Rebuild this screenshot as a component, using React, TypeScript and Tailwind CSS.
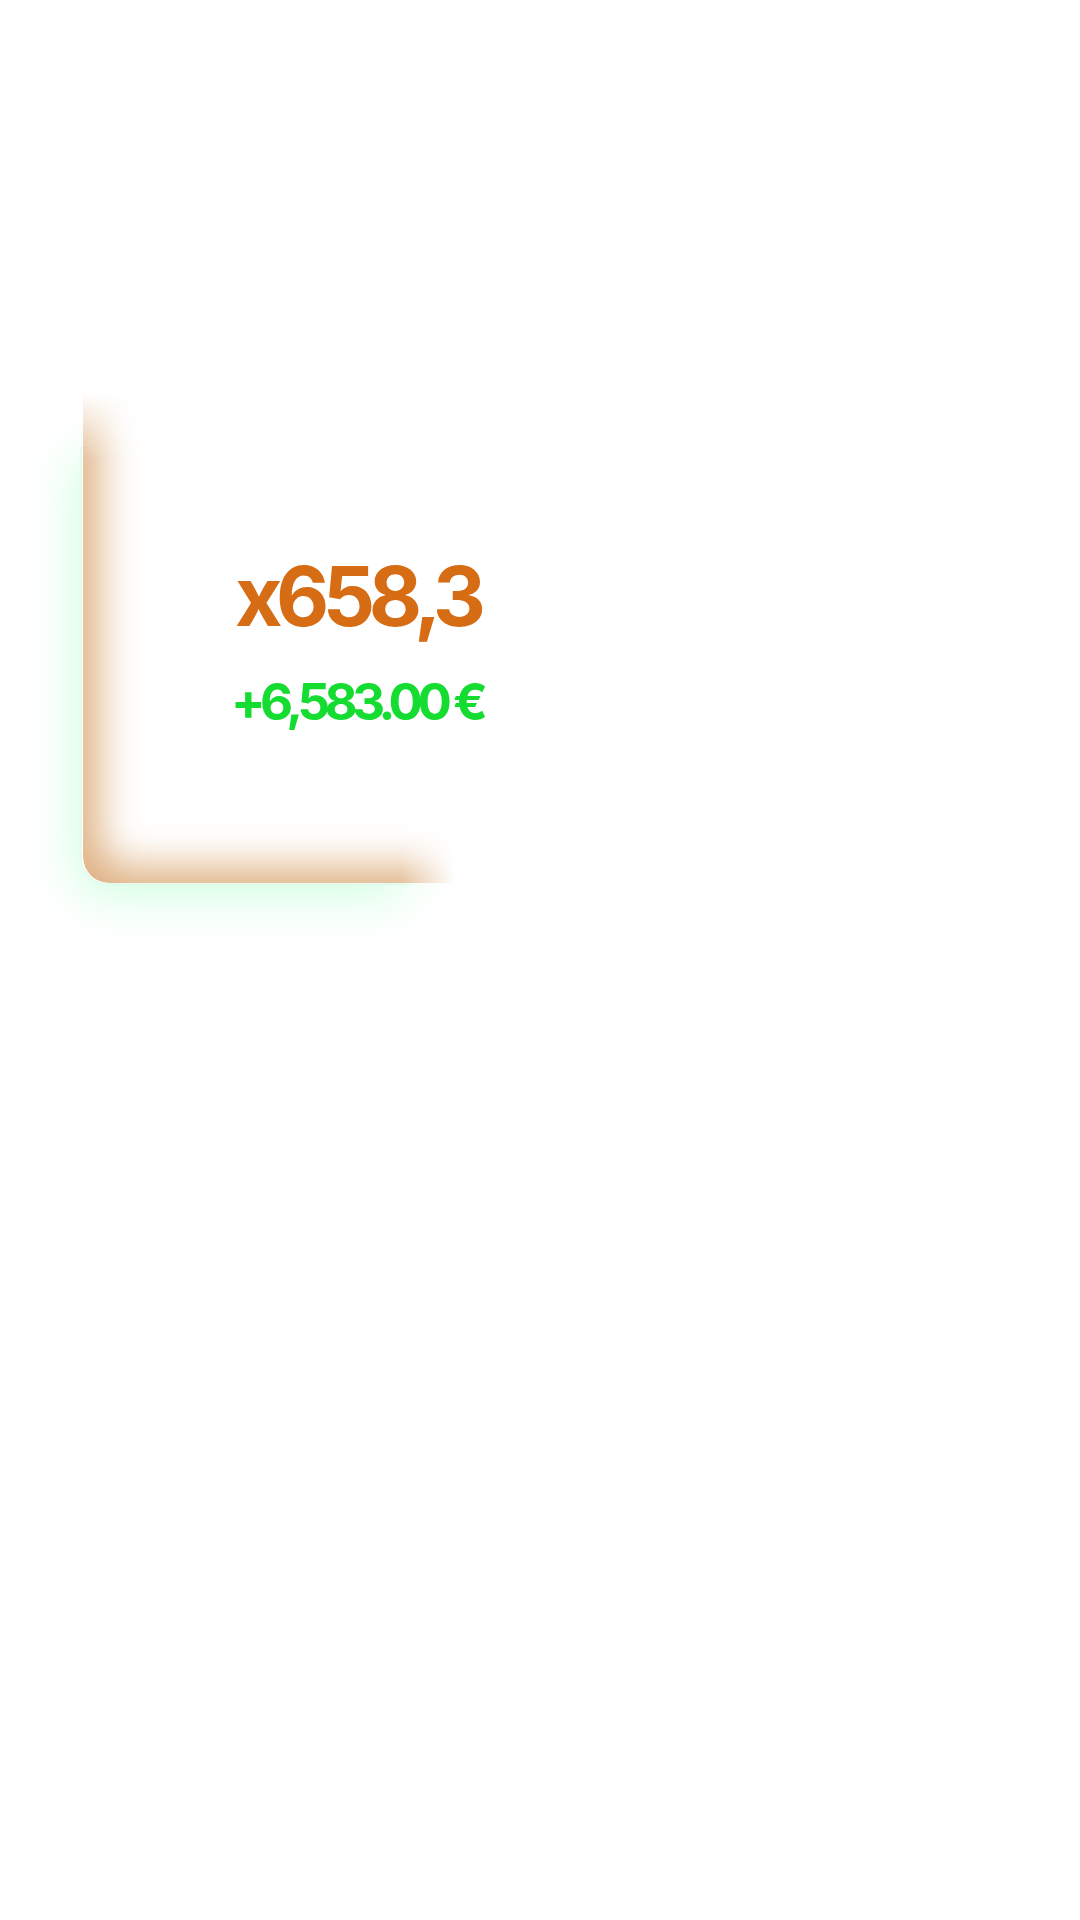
import React from "react";

export default function App() {
  return (
    <div className="relative w-[1080px] h-[1920px] bg-white overflow-hidden" style={{ fontFamily: "Inter, 'Noto Sans', sans-serif" }}>
      <div className="relative ml-[80px] mt-[447px] w-[329px] h-[438px] rounded-bl-[28px] border-2 border-[#e3fbec] bg-white shadow-[-4px_10px_50px_rgba(110,255,160,0.32)]">
        <div className="absolute left-[1px] top-[-59px] bottom-0 w-[420px] rounded-bl-[26px] bg-white [mask-image:linear-gradient(to_bottom,transparent_0px,black_40px)]" />
        <div className="absolute left-[1px] top-[-70px] bottom-0 w-[440px] rounded-bl-[26px] shadow-[inset_16px_-16px_40px_#dfb182] [mask-image:linear-gradient(to_right,black_318px,transparent_372px),linear-gradient(to_bottom,transparent_14px,black_80px)] [mask-composite:intersect]" />
        <div className="relative z-10 pl-[153px] pt-[107px] flex flex-col">
          <div className="text-[82px] leading-none font-bold text-[#d66c14] tracking-[-6.5px] whitespace-nowrap">x658,3</div>
          <div className="mt-[38px] -ml-[4px] text-[51px] leading-none font-bold text-[#14dc30] tracking-[-5.5px] whitespace-nowrap">+6,583.00 €</div>
        </div>
      </div>
    </div>
  );
}
